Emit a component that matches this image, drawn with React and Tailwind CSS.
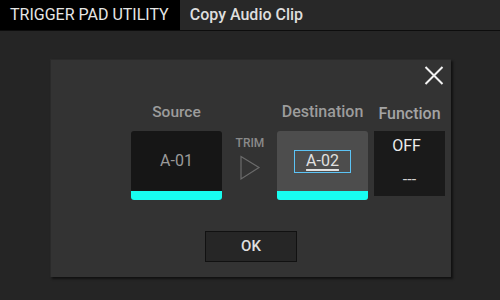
const CYAN = 'bg-[#18fdf0]'

function Header() {
  return (
    <div className="flex h-[31px] border-b border-[#0d0d0d] bg-[#282828] text-[16px] leading-[30px]">
      <div className="bg-black pl-[10px] pr-[11px] text-[#e6e6e6]">TRIGGER PAD UTILITY</div>
      <div className="pl-[10px] font-medium text-[#dedede]">Copy Audio Clip</div>
    </div>
  )
}

function CloseIcon() {
  return (
    <svg width="20" height="19" viewBox="0 0 20 19">
      <path d="M1.5 1 L18.5 18 M18.5 1 L1.5 18" stroke="#f2f2f2" strokeWidth="2" />
    </svg>
  )
}

function SlotBox({ dark, children }) {
  return (
    <div className={`flex h-[69px] w-[91px] flex-col overflow-hidden rounded-[3px] ${dark ? 'bg-[#161616]' : 'bg-[#4d4d4d]'}`}>
      <div className="flex flex-1 items-center justify-center">{children}</div>
      <div className={`h-[9px] ${CYAN}`}></div>
    </div>
  )
}

export default function App() {
  return (
    <div className="h-[300px] w-[500px] overflow-hidden bg-[#252525]" style={{ fontFamily: 'Roboto, "Noto Sans", sans-serif' }}>
      <Header />
      <div className="pl-[50px] pt-[28px]">
        <div className="flex h-[218px] w-[401px] flex-col border-t border-l border-[#2a2a2a] bg-[#333333] shadow-[2px_2px_2px_rgba(0,0,0,0.55)]">
          {/* close */}
          <div className="flex justify-end pr-[7px] pt-[6px]">
            <CloseIcon />
          </div>

          {/* columns */}
          <div className="mt-[17px] flex pl-[80px] font-medium">
            <div className="flex flex-col items-center">
              <div className="mb-[9px] h-[20px] text-[15.5px] leading-[20px] text-[#9c9c9c]">Source</div>
              <SlotBox dark>
                <span className="text-[16px] font-normal text-[#9a9a9a]">A-01</span>
              </SlotBox>
            </div>

            <div className="ml-[11px] flex w-[34px] flex-col items-center pt-[33px]">
              <div className="text-[12px] leading-[16px] text-[#8a8a8a]">TRIM</div>
              <svg width="22" height="26" viewBox="0 0 22 26" className="mt-[4px]">
                <path d="M2 1.5 L20 12.5 L2 24 Z" fill="none" stroke="#6b6b6b" strokeWidth="1.2" />
              </svg>
            </div>

            <div className="ml-[10px] flex flex-col items-center">
              <div className="mb-[9px] h-[20px] text-[16px] leading-[20px] text-[#9c9c9c]">Destination</div>
              <SlotBox>
                <div className="flex h-[23px] w-[57px] items-center justify-center border-[1.5px] border-[#5cc3f5]">
                  <span className="text-[16px] font-normal leading-[20px] text-[#e0e0e0] underline decoration-[1.5px] underline-offset-[3px]">A-02</span>
                </div>
              </SlotBox>
            </div>

            <div className="ml-[6px] flex flex-col items-center">
              <div className="mb-[9px] h-[20px] pt-[2px] text-[16px] leading-[20px] text-[#a4a4a4]">Function</div>
              <div className="flex h-[65px] w-[71px] flex-col items-center bg-[#1a1a1a] pt-[5px] text-[16px] font-normal leading-[20px] text-[#ececec]">
                <div className="-ml-[6px]">OFF</div>
                <div className="mt-[14px] text-[#d0d0d0]">---</div>
              </div>
            </div>
          </div>

          {/* ok */}
          <div className="mt-[31px] flex justify-center">
            <button className="h-[31px] w-[92px] border border-[#111] bg-[#262626] text-[15px] font-medium text-[#e0e0e0]">OK</button>
          </div>
        </div>
      </div>
    </div>
  )
}
